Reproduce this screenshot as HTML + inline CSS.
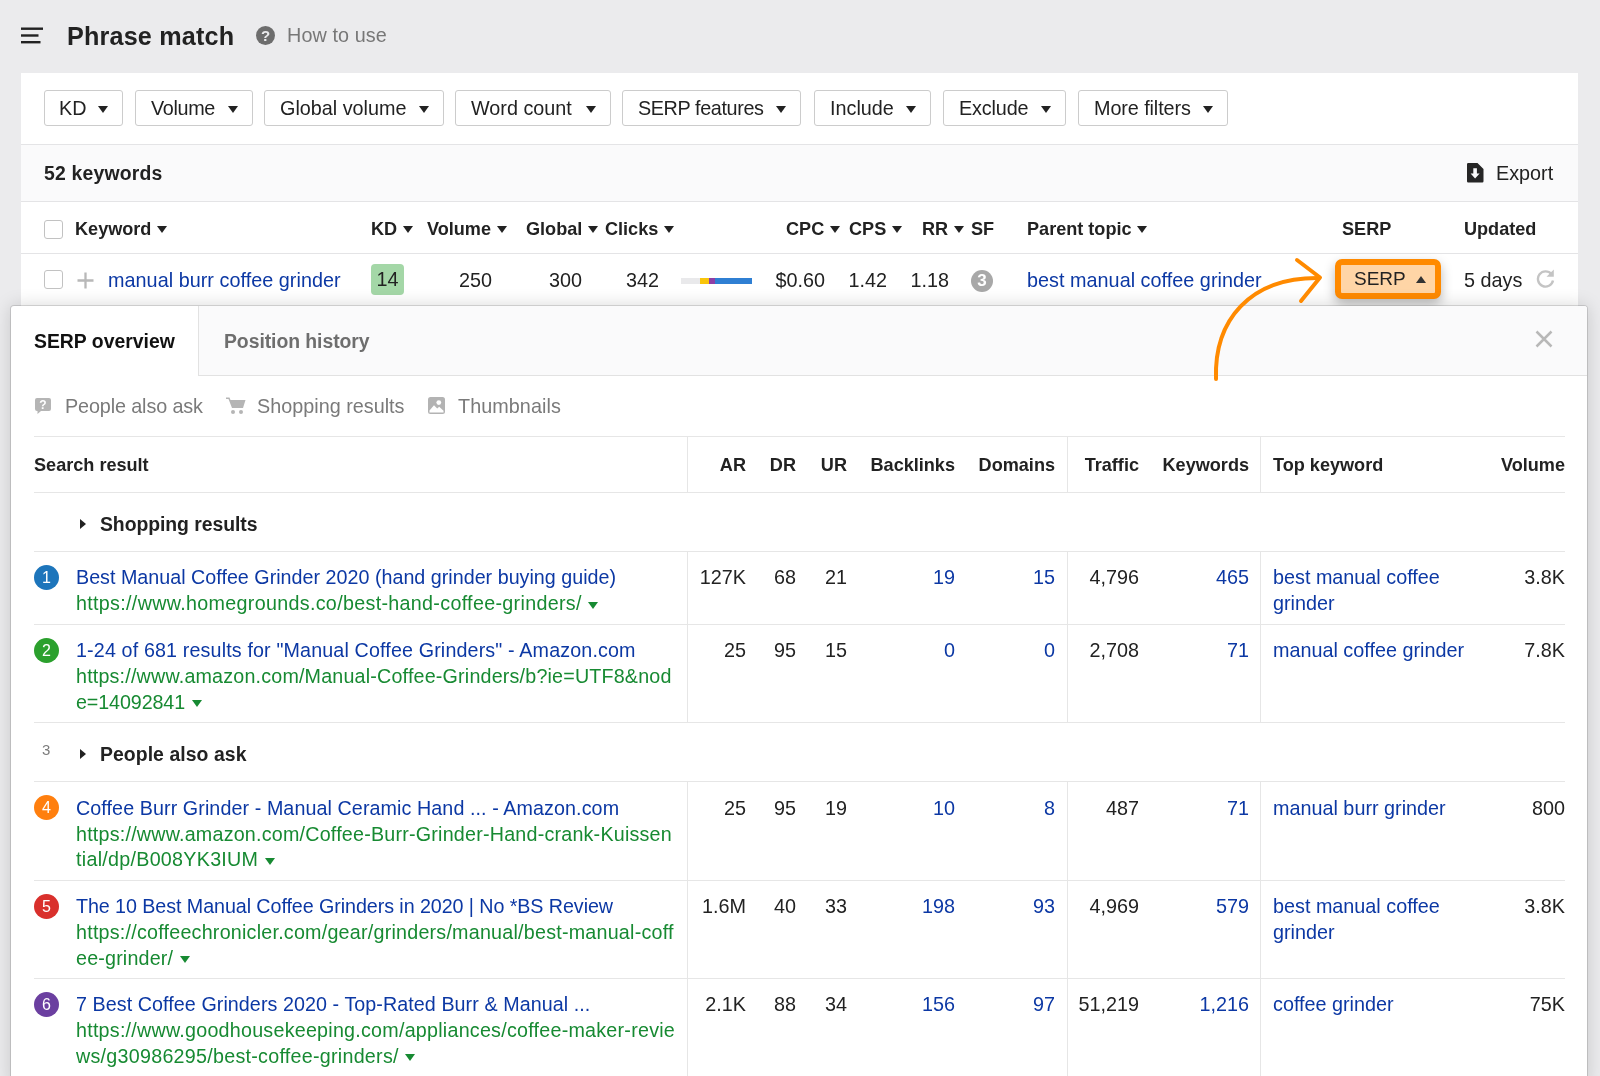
<!DOCTYPE html>
<html lang="en">
<head>
<meta charset="utf-8">
<title>Phrase match</title>
<style>
*{box-sizing:border-box;margin:0;padding:0}
html,body{width:1600px;height:1076px;overflow:hidden}
body{background:#ebebed;font-family:"Liberation Sans",Arial,sans-serif;color:#222;font-size:19.8px;position:relative}
a{text-decoration:none;color:#0c38a4}
.abs{position:absolute;white-space:nowrap}
.b{font-weight:700}
/* header */
#burger{position:absolute;left:21px;top:27px;width:22px;height:17px}
#title{left:67px;top:21px;font-size:25.2px;font-weight:700;line-height:30px;color:#222}
#help{position:absolute;left:256px;top:26px;width:19px;height:19px}
#howto{left:287px;top:23px;font-size:19.8px;line-height:24px;color:#777}
#hdr{position:absolute;left:0;top:0;width:1600px;height:73px;will-change:transform}
/* card */
#card{will-change:transform;position:absolute;left:21px;top:73px;width:1557px;height:1003px;background:#fff}
.fbtn{position:absolute;top:17px;height:36px;border:1px solid #ccc;border-radius:3px;background:#fff;font-size:19.8px;line-height:34px;padding-left:15px;white-space:nowrap;color:#222}
.fbtn i{position:absolute;right:14px;top:15px;width:0;height:0;border-left:5.5px solid transparent;border-right:5.5px solid transparent;border-top:7px solid #222}
#bar{position:absolute;left:0;top:71px;width:1557px;height:58px;background:#fafafb;border-top:1px solid #e4e4e6;border-bottom:1px solid #e4e4e6}
#kwcount{left:23px;top:16px;font-size:19.4px;font-weight:700;line-height:24px}
#export{left:1475px;top:16px;font-size:19.8px;line-height:24px;color:#222}
#expico{position:absolute;left:1446px;top:18px;width:16.5px;height:19.5px}
.th{position:absolute;top:143.5px;font-weight:700;font-size:18.1px;line-height:24px;white-space:nowrap;color:#222}
.th i{display:inline-block;width:0;height:0;border-left:5.5px solid transparent;border-right:5.5px solid transparent;border-top:7px solid #222;margin-left:5.5px;position:relative;top:-1.5px}
#hline{position:absolute;left:0;top:180px;width:1557px;height:1px;background:#e4e4e6}
.cb{position:absolute;left:23px;width:19px;height:19px;border:1px solid #c2c2c2;border-radius:3px;background:#fff}
.td{position:absolute;top:195px;font-size:19.8px;line-height:24px;white-space:nowrap;color:#222}
.r{text-align:right}
#kd{position:absolute;left:350px;top:191px;width:33px;height:31px;border-radius:4px;background:#a4d7a7;text-align:center;line-height:31px;font-size:19.8px;color:#222}
#spark{position:absolute;left:660px;top:205px;width:70.5px;height:5.5px;background:#e9e9eb}
#spark b{position:absolute;top:0;height:5.5px}
#sf{position:absolute;left:950px;top:197px;width:22px;height:22px;border-radius:50%;background:#a8a8a8;color:#fff;font-weight:700;font-size:17px;line-height:22px;text-align:center}
#serpbtn{position:absolute;left:1314px;top:186px;width:106px;height:40px;border:6px solid #ff8a00;border-radius:7px;background:#ffd5a6;box-shadow:0 5px 12px rgba(0,0,0,.28);font-size:19px;line-height:28px;padding-left:13px;color:#222}
#serpbtn i{position:absolute;left:75px;top:11px;width:0;height:0;border-left:5.5px solid transparent;border-right:5.5px solid transparent;border-bottom:7px solid #333}
#refresh{position:absolute;left:1515px;top:196px;width:19px;height:20px}
/* panel */
#panel{will-change:transform;position:absolute;left:11px;top:306px;width:1576px;height:780px;background:#fff;border-radius:3px 3px 0 0;box-shadow:0 0 0 1px rgba(0,0,0,.13),0 0 18px rgba(0,0,0,.17)}
#pin{position:absolute;left:-1px;top:0;width:1577px;height:780px}
#tabs{border-radius:0 3px 0 0;position:absolute;left:188px;top:0;width:1389px;height:70px;background:#fafafb;border-left:1px solid #e2e2e2;border-bottom:1px solid #e2e2e2}
.tab{position:absolute;top:23px;font-size:19.4px;font-weight:700;line-height:24px;white-space:nowrap}
#close{position:absolute;left:1525px;top:24px;width:18px;height:18px}
.lg{position:absolute;top:88px;font-size:19.8px;line-height:24px;color:#7a7a7a;white-space:nowrap}
.lgi{position:absolute}
.hl{position:absolute;left:24px;width:1531px;height:1px;background:#e6e6e6}
.vl{position:absolute;width:1px;background:#e6e6e6}
.sh{position:absolute;top:146.5px;font-weight:700;font-size:18.1px;line-height:24px;white-space:nowrap;color:#222}
.c{position:absolute;font-size:19.8px;line-height:25.5px;color:#222;white-space:nowrap}
.c.w{white-space:normal}
.blue{color:#0c38a4}
.num{position:absolute;left:24px;width:25px;height:25px;border-radius:50%;color:#fff;font-size:16px;line-height:25px;text-align:center}
.ttl{position:absolute;left:66px;font-size:19.7px;line-height:25.5px;color:#0c38a4;white-space:nowrap}
.url{position:absolute;left:66px;width:610px;font-size:19.7px;line-height:25.5px;color:#178a32;word-break:break-all}
.url i{display:inline-block;width:0;height:0;border-left:5.3px solid transparent;border-right:5.3px solid transparent;border-top:7px solid #178a32;margin-left:6.5px;position:relative;top:-1.5px}
.grp{position:absolute;left:90px;font-size:19.4px;font-weight:700;line-height:24px;white-space:nowrap;color:#222}
.tri{position:absolute;left:70px;width:0;height:0;border-top:5px solid transparent;border-bottom:5px solid transparent;border-left:6.5px solid #222}
/*FIT*/
#title{letter-spacing:0.167px}
#howto{letter-spacing:0.100px}
#kwcount{letter-spacing:0.185px}
#f2{letter-spacing:-0.334px}
#f3{letter-spacing:0.000px}
#f4{letter-spacing:0.000px}
#f5{letter-spacing:-0.382px}
#f6{letter-spacing:0.000px}
#f7{letter-spacing:-0.143px}
#f8{letter-spacing:-0.084px}
#kw{letter-spacing:0.038px}
#pt{letter-spacing:0.03px}
#tab1{letter-spacing:0.000px}
#tab2{letter-spacing:-0.062px}
#lg1{letter-spacing:-0.122px}
#lg2{letter-spacing:0.010px}
#lg3{letter-spacing:0.060px}
#g1{letter-spacing:-0.062px}
#g2{letter-spacing:0.066px}
#t1{letter-spacing:0.015px}
#u1a{letter-spacing:0.321px}
#t2{letter-spacing:0.143px}
#u2a{letter-spacing:0.188px}
#u2b{letter-spacing:-0.100px}
#t4{letter-spacing:0.089px}
#u4a{letter-spacing:0.215px}
#u4b{letter-spacing:0.278px}
#t5{letter-spacing:-0.069px}
#u5a{letter-spacing:0.230px}
#u5b{letter-spacing:0.181px}
#t6{letter-spacing:0.070px}
#u6a{letter-spacing:0.242px}
#u6b{letter-spacing:0.265px}
/*ENDFIT*/
</style>
</head>
<body>
<!-- HEADER -->
<div id="hdr">
<svg id="burger" viewBox="0 0 22 17"><rect x="0" y="0.5" width="22" height="2.4" fill="#222"/><rect x="0" y="7.3" width="17.5" height="2.4" fill="#222"/><rect x="0" y="14" width="19.5" height="2.4" fill="#222"/></svg>
<div id="title" class="abs">Phrase match</div>
<svg id="help" viewBox="0 0 19 19"><circle cx="9.5" cy="9.5" r="9.5" fill="#6d6d6d"/><text x="9.5" y="14.9" text-anchor="middle" font-family="Liberation Sans, sans-serif" font-weight="700" font-size="15" fill="#ebebed">?</text></svg>
<div id="howto" class="abs">How to use</div>
</div>

<!-- MAIN CARD -->
<div id="card">
  <div class="fbtn" style="left:23px;width:79px;padding-left:14px"><span id="f1">KD</span><i></i></div>
  <div class="fbtn" style="left:114px;width:118px"><span id="f2">Volume</span><i></i></div>
  <div class="fbtn" style="left:243px;width:180px"><span id="f3">Global volume</span><i></i></div>
  <div class="fbtn" style="left:434px;width:156px"><span id="f4">Word count</span><i></i></div>
  <div class="fbtn" style="left:601px;width:179px"><span id="f5">SERP features</span><i></i></div>
  <div class="fbtn" style="left:793px;width:117px"><span id="f6">Include</span><i></i></div>
  <div class="fbtn" style="left:922px;width:123px"><span id="f7">Exclude</span><i></i></div>
  <div class="fbtn" style="left:1057px;width:150px"><span id="f8">More filters</span><i></i></div>

  <div id="bar">
    <div id="kwcount" class="abs">52 keywords</div>
    <svg id="expico" viewBox="0 0 16.5 19.5"><path d="M1.2 0h9.3l6 6v12.3a1.2 1.2 0 0 1-1.2 1.2h-14.1a1.2 1.2 0 0 1-1.2-1.2v-17.1a1.2 1.2 0 0 1 1.2-1.2z" fill="#262626"/><path d="M6.3 5.3h3.6v5.2h2.7l-4.5 5-4.5-5h2.7z" fill="#fafafb"/></svg>
    <div id="export" class="abs">Export</div>
  </div>

  <div class="cb" style="top:146.5px"></div>
  <div class="th" style="left:54px">Keyword<i></i></div>
  <div class="th" style="left:350px">KD<i></i></div>
  <div class="th" style="left:406px">Volume<i></i></div>
  <div class="th" style="left:505px">Global<i></i></div>
  <div class="th" style="left:584px">Clicks<i></i></div>
  <div class="th" style="left:765px">CPC<i></i></div>
  <div class="th" style="left:828px">CPS<i></i></div>
  <div class="th" style="left:901px">RR<i></i></div>
  <div class="th" style="left:950px">SF</div>
  <div class="th" style="left:1006px">Parent topic<i></i></div>
  <div class="th" style="left:1321px">SERP</div>
  <div class="th" style="left:1443px">Updated</div>
  <div id="hline"></div>

  <div class="cb" style="top:197px"></div>
  <svg style="position:absolute;left:56px;top:199px;width:17px;height:17px" viewBox="0 0 17 17"><path d="M8.5 0.5v16M0.5 8.5h16" stroke="#b8b8b8" stroke-width="2.3" fill="none"/></svg>
  <div class="td" style="left:87px"><a id="kw">manual burr coffee grinder</a></div>
  <div id="kd">14</div>
  <div class="td r" style="left:420px;width:51px">250</div>
  <div class="td r" style="left:510px;width:51px">300</div>
  <div class="td r" style="left:587px;width:51px">342</div>
  <div id="spark"><b style="left:19px;width:9px;background:#f9c50b"></b><b style="left:28px;width:5.5px;background:#8e3fa6"></b><b style="left:33.5px;width:37px;background:#2f7fd3"></b></div>
  <div class="td r" style="left:740px;width:64px">$0.60</div>
  <div class="td r" style="left:815px;width:51px">1.42</div>
  <div class="td r" style="left:877px;width:51px">1.18</div>
  <div id="sf">3</div>
  <div class="td" style="left:1006px"><a id="pt">best manual coffee grinder</a></div>
  <div id="serpbtn">SERP<i></i></div>
  <div class="td" style="left:1443px">5 days</div>
  <svg id="refresh" viewBox="0 0 19 20"><path d="M15.5 5.2A7.6 7.6 0 1 0 17 11.5" stroke="#c4c4c4" stroke-width="2.4" fill="none"/><path d="M17.8 0.5v7.3h-7.3z" fill="#c4c4c4"/></svg>
</div>

<!-- SERP PANEL -->
<div id="panel"><div id="pin">
  <div id="tabs"></div>
  <div class="tab" id="tab1" style="left:24px;color:#111">SERP overview</div>
  <div class="tab" id="tab2" style="left:214px;color:#6e6e6e">Position history</div>
  <svg id="close" viewBox="0 0 18 18"><path d="M1.5 1.5l15 15M16.5 1.5L1.5 16.5" stroke="#b8b8b8" stroke-width="2.5" fill="none"/></svg>

  <svg class="lgi" style="left:25px;top:92px;width:16px;height:16px" viewBox="0 0 16 16"><path d="M2 0h12a2 2 0 0 1 2 2v9a2 2 0 0 1-2 2H6l-3.5 3v-3H2a2 2 0 0 1-2-2V2a2 2 0 0 1 2-2z" fill="#b5b5b5"/><text x="8" y="10.8" text-anchor="middle" font-family="Liberation Sans, sans-serif" font-weight="700" font-size="12" fill="#fff">?</text></svg>
  <div class="lg" id="lg1" style="left:55px">People also ask</div>
  <svg class="lgi" style="left:216px;top:91px;width:20px;height:18px" viewBox="0 0 20 18"><path d="M0 0.5h3.5l1 2.5h15l-2.5 8h-11l-3.5-9h-2.5z" fill="#b5b5b5"/><circle cx="7" cy="15" r="2" fill="#b5b5b5"/><circle cx="15" cy="15" r="2" fill="#b5b5b5"/></svg>
  <div class="lg" id="lg2" style="left:247px">Shopping results</div>
  <svg class="lgi" style="left:418px;top:91px;width:17px;height:17px" viewBox="0 0 17 17"><rect x="0" y="0" width="17" height="17" rx="2.5" fill="#b3b3b3"/><circle cx="10.8" cy="5.6" r="2.4" fill="#fff"/><path d="M1.5 13.5L6 8.2l3.2 3.4 2-1.8 4.3 3.9v1.8h-14z" fill="#fff"/></svg>
  <div class="lg" id="lg3" style="left:448px">Thumbnails</div>
  <div class="hl" style="top:130px"></div>
  <div class="hl" style="top:186px"></div>
  <div class="hl" style="top:245px"></div>
  <div class="hl" style="top:318px"></div>
  <div class="hl" style="top:416px"></div>
  <div class="hl" style="top:475px"></div>
  <div class="hl" style="top:574px"></div>
  <div class="hl" style="top:672px"></div>
  <div class="vl" style="left:677px;top:130px;height:56px"></div>
  <div class="vl" style="left:677px;top:245px;height:171px"></div>
  <div class="vl" style="left:677px;top:475px;height:305px"></div>
  <div class="vl" style="left:1057px;top:130px;height:56px"></div>
  <div class="vl" style="left:1057px;top:245px;height:171px"></div>
  <div class="vl" style="left:1057px;top:475px;height:305px"></div>
  <div class="vl" style="left:1250px;top:130px;height:56px"></div>
  <div class="vl" style="left:1250px;top:245px;height:171px"></div>
  <div class="vl" style="left:1250px;top:475px;height:305px"></div>
  <div class="sh" style="left:24px">Search result</div>
  <div class="sh r" style="left:616px;width:120px;top:146.5px">AR</div>
  <div class="sh r" style="left:666px;width:120px;top:146.5px">DR</div>
  <div class="sh r" style="left:717px;width:120px;top:146.5px">UR</div>
  <div class="sh r" style="left:825px;width:120px;top:146.5px">Backlinks</div>
  <div class="sh r" style="left:925px;width:120px;top:146.5px">Domains</div>
  <div class="sh r" style="left:1009px;width:120px;top:146.5px">Traffic</div>
  <div class="sh r" style="left:1119px;width:120px;top:146.5px">Keywords</div>
  <div class="sh r" style="left:1435px;width:120px;top:146.5px">Volume</div>
  <div class="sh" style="left:1263px">Top keyword</div>
  <div class="tri" style="top:213px"></div><div class="grp" id="g1" style="top:206px">Shopping results</div>
  <div class="c" style="left:32px;top:433.5px;font-size:15px;line-height:20px;color:#7c7c7c">3</div>
  <div class="tri" style="top:443px"></div><div class="grp" id="g2" style="top:436px">People also ask</div>
  <div class="num" style="top:259px;background:#1d75bb">1</div>
  <div class="ttl" style="top:259.0px"><a id="t1">Best Manual Coffee Grinder 2020 (hand grinder buying guide)</a></div>
  <div class="url" style="top:285.0px"><span id="u1a">https://www.homegrounds.co/best-hand-coffee-grinders/</span><i></i></div>
  <div class="c r" style="left:616px;width:120px;top:259.0px">127K</div>
  <div class="c r" style="left:666px;width:120px;top:259.0px">68</div>
  <div class="c r" style="left:717px;width:120px;top:259.0px">21</div>
  <div class="c blue r" style="left:825px;width:120px;top:259.0px">19</div>
  <div class="c blue r" style="left:925px;width:120px;top:259.0px">15</div>
  <div class="c r" style="left:1009px;width:120px;top:259.0px">4,796</div>
  <div class="c blue r" style="left:1119px;width:120px;top:259.0px">465</div>
  <div class="c r" style="left:1435px;width:120px;top:259.0px">3.8K</div>
  <div class="c blue" style="left:1263px;top:259.0px">best manual coffee<br>grinder</div>
  <div class="num" style="top:332px;background:#2ba02d">2</div>
  <div class="ttl" style="top:332.0px"><a id="t2">1-24 of 681 results for "Manual Coffee Grinders" - Amazon.com</a></div>
  <div class="url" style="top:358.0px"><span id="u2a">https://www.amazon.com/Manual-Coffee-Grinders/b?ie=UTF8&amp;nod</span><br><span id="u2b">e=14092841</span><i></i></div>
  <div class="c r" style="left:616px;width:120px;top:332.0px">25</div>
  <div class="c r" style="left:666px;width:120px;top:332.0px">95</div>
  <div class="c r" style="left:717px;width:120px;top:332.0px">15</div>
  <div class="c blue r" style="left:825px;width:120px;top:332.0px">0</div>
  <div class="c blue r" style="left:925px;width:120px;top:332.0px">0</div>
  <div class="c r" style="left:1009px;width:120px;top:332.0px">2,708</div>
  <div class="c blue r" style="left:1119px;width:120px;top:332.0px">71</div>
  <div class="c r" style="left:1435px;width:120px;top:332.0px">7.8K</div>
  <div class="c blue" style="left:1263px;top:332.0px">manual coffee grinder</div>
  <div class="num" style="top:489px;background:#ff7f0e">4</div>
  <div class="ttl" style="top:489.5px"><a id="t4">Coffee Burr Grinder - Manual Ceramic Hand ... - Amazon.com</a></div>
  <div class="url" style="top:515.5px"><span id="u4a">https://www.amazon.com/Coffee-Burr-Grinder-Hand-crank-Kuissen</span><br><span id="u4b">tial/dp/B008YK3IUM</span><i></i></div>
  <div class="c r" style="left:616px;width:120px;top:489.5px">25</div>
  <div class="c r" style="left:666px;width:120px;top:489.5px">95</div>
  <div class="c r" style="left:717px;width:120px;top:489.5px">19</div>
  <div class="c blue r" style="left:825px;width:120px;top:489.5px">10</div>
  <div class="c blue r" style="left:925px;width:120px;top:489.5px">8</div>
  <div class="c r" style="left:1009px;width:120px;top:489.5px">487</div>
  <div class="c blue r" style="left:1119px;width:120px;top:489.5px">71</div>
  <div class="c r" style="left:1435px;width:120px;top:489.5px">800</div>
  <div class="c blue" style="left:1263px;top:489.5px">manual burr grinder</div>
  <div class="num" style="top:588px;background:#d9302c">5</div>
  <div class="ttl" style="top:588.0px"><a id="t5">The 10 Best Manual Coffee Grinders in 2020 | No *BS Review</a></div>
  <div class="url" style="top:614.0px"><span id="u5a">https://coffeechronicler.com/gear/grinders/manual/best-manual-coff</span><br><span id="u5b">ee-grinder/</span><i></i></div>
  <div class="c r" style="left:616px;width:120px;top:588.0px">1.6M</div>
  <div class="c r" style="left:666px;width:120px;top:588.0px">40</div>
  <div class="c r" style="left:717px;width:120px;top:588.0px">33</div>
  <div class="c blue r" style="left:825px;width:120px;top:588.0px">198</div>
  <div class="c blue r" style="left:925px;width:120px;top:588.0px">93</div>
  <div class="c r" style="left:1009px;width:120px;top:588.0px">4,969</div>
  <div class="c blue r" style="left:1119px;width:120px;top:588.0px">579</div>
  <div class="c r" style="left:1435px;width:120px;top:588.0px">3.8K</div>
  <div class="c blue" style="left:1263px;top:588.0px">best manual coffee<br>grinder</div>
  <div class="num" style="top:686px;background:#6b3fa0">6</div>
  <div class="ttl" style="top:686.0px"><a id="t6">7 Best Coffee Grinders 2020 - Top-Rated Burr &amp; Manual ...</a></div>
  <div class="url" style="top:712.0px"><span id="u6a">https://www.goodhousekeeping.com/appliances/coffee-maker-revie</span><br><span id="u6b">ws/g30986295/best-coffee-grinders/</span><i></i></div>
  <div class="c r" style="left:616px;width:120px;top:686.0px">2.1K</div>
  <div class="c r" style="left:666px;width:120px;top:686.0px">88</div>
  <div class="c r" style="left:717px;width:120px;top:686.0px">34</div>
  <div class="c blue r" style="left:825px;width:120px;top:686.0px">156</div>
  <div class="c blue r" style="left:925px;width:120px;top:686.0px">97</div>
  <div class="c r" style="left:1009px;width:120px;top:686.0px">51,219</div>
  <div class="c blue r" style="left:1119px;width:120px;top:686.0px">1,216</div>
  <div class="c r" style="left:1435px;width:120px;top:686.0px">75K</div>
  <div class="c blue" style="left:1263px;top:686.0px">coffee grinder</div>
</div></div>

<!-- ARROW -->
<svg style="position:absolute;left:1200px;top:250px;width:140px;height:140px;overflow:visible" viewBox="0 0 140 140"><path d="M16 129C14 70 50 28 117 28" stroke="#ff8a00" stroke-width="4" fill="none" stroke-linecap="round"/><path d="M97 10l23 17.5-19 23.5" stroke="#ff8a00" stroke-width="4" fill="none" stroke-linecap="round" stroke-linejoin="round"/></svg>
</body>
</html>
